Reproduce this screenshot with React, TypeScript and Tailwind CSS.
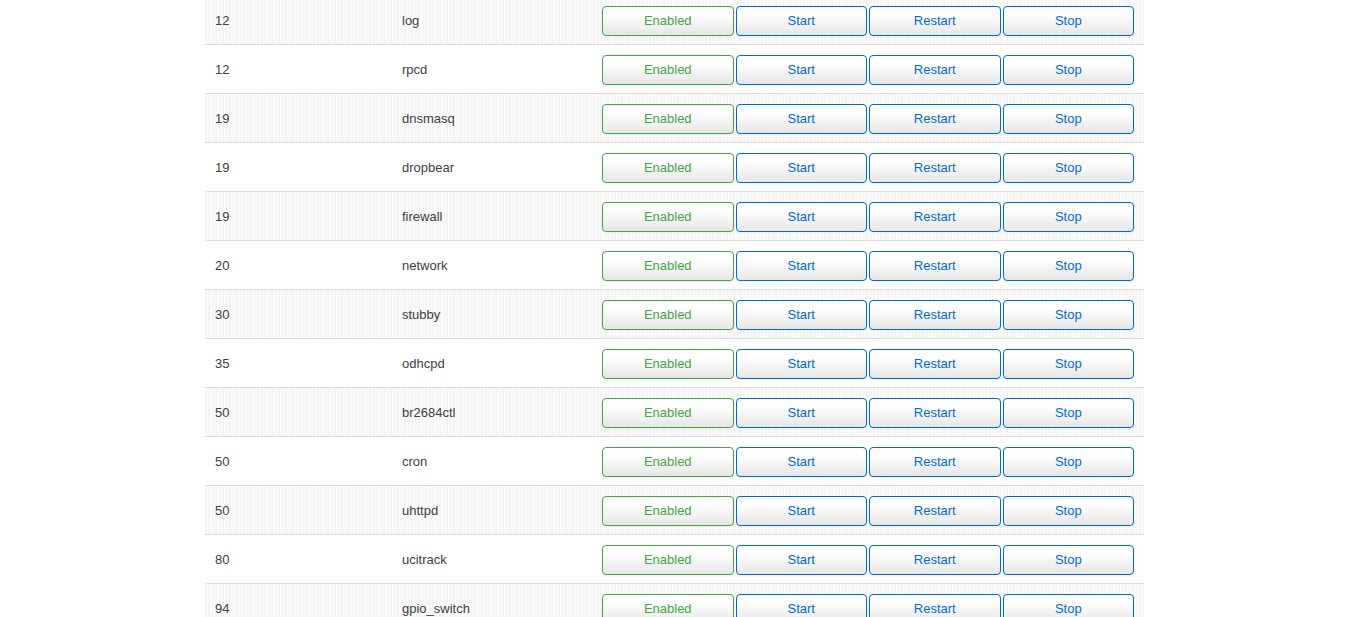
import React from "react";

const rows: [string, string][] = [
  ["12", "log"],
  ["12", "rpcd"],
  ["19", "dnsmasq"],
  ["19", "dropbear"],
  ["19", "firewall"],
  ["20", "network"],
  ["30", "stubby"],
  ["35", "odhcpd"],
  ["50", "br2684ctl"],
  ["50", "cron"],
  ["50", "uhttpd"],
  ["80", "ucitrack"],
  ["94", "gpio_switch"],
];

const btnBase =
  "h-[30px] rounded-[4px] border bg-[linear-gradient(#ffffff,#ffffff_25%,#e6e6e6)] text-[13px] leading-[28px] text-center shadow-[inset_0_1px_0_rgba(255,255,255,0.2),0_1px_2px_rgba(0,0,0,0.05)]";

export default function App() {
  return (
    <div
      className="w-[1349px] h-[617px] overflow-hidden bg-white"
      style={{ fontFamily: '"Liberation Sans", Arial, sans-serif' }}
    >
      <div className="ml-[205px] w-[939px] mt-[-4px]">
        {rows.map(([prio, name], i) => (
          <div
            key={i}
            className={
              "flex items-center h-[49px] pt-[2px] border-b border-[#dddddd] text-[13px] text-[#404040] " +
              (i % 2 === 0
                ? "bg-[repeating-linear-gradient(90deg,#f6f6f6_0px,#f6f6f6_2px,#fcfcfc_2px,#fcfcfc_3px,#f4f4f4_3px,#f4f4f4_5px,#fbfbfb_5px,#fbfbfb_7px)]"
                : "bg-white")
            }
          >
            <div className="w-[187px] pl-[10px]">{prio}</div>
            <div className="w-[200px] pl-[10px]">{name}</div>
            <div className="flex-1 pl-[10px] pr-[10px]">
              <div className="grid grid-cols-4 gap-[2px] w-[532px]">
                <div className={btnBase + " border-[#46a546] text-[#46a546]"}>Enabled</div>
                <div className={btnBase + " border-[#0069d6] text-[#0069d6]"}>Start</div>
                <div className={btnBase + " border-[#0069d6] text-[#0069d6]"}>Restart</div>
                <div className={btnBase + " border-[#0069d6] text-[#0069d6]"}>Stop</div>
              </div>
            </div>
          </div>
        ))}
      </div>
    </div>
  );
}
